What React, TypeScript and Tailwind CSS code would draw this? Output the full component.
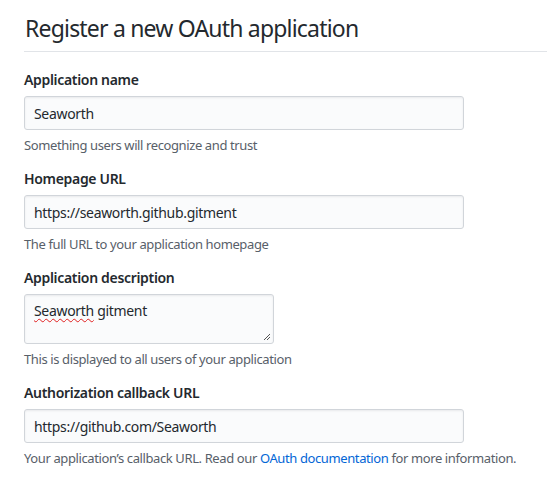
const font = { fontFamily: '"Noto Sans", "Open Sans", sans-serif' };

function Field({
  label,
  value,
  note,
}: {
  label: string;
  value: string;
  note: React.ReactNode;
}) {
  return (
    <div className="mb-[15px]">
      <div className="text-[14px] leading-[20px] font-semibold text-[#24292e]">{label}</div>
      <div className="mt-[6px] w-[440px] h-[34px] flex items-center px-[9px] bg-[#fafbfc] border border-[#d1d5da] rounded-[3px] text-[14px] text-[#24292e] shadow-[inset_0_1px_2px_rgba(27,31,35,0.075)]">
        {value}
      </div>
      <div className="mt-[6px] text-[13px] leading-[18px] tracking-[-0.03em] text-[#586069]">{note}</div>
    </div>
  );
}

export default function App() {
  return (
    <div className="min-h-screen bg-white pl-[24px] pt-[13px] tracking-[-0.02em]" style={font}>
      {/* 見出し */}
      <div className="pb-[8px] border-b border-[#e1e4e8] mb-[18px]">
        <h1 className="text-[23px] leading-[30px] font-normal tracking-[-0.035em] text-[#24292e] pl-[1px]">
          Register a new OAuth application
        </h1>
      </div>

      <Field label="Application name" value="Seaworth" note="Something users will recognize and trust" />
      <Field
        label="Homepage URL"
        value="https://seaworth.github.gitment"
        note="The full URL to your application homepage"
      />

      {/* 説明 */}
      <div className="mb-[15px]">
        <div className="text-[14px] leading-[20px] font-semibold text-[#24292e]">Application description</div>
        <div className="relative mt-[6px] w-[250px] h-[50px] px-[9px] py-[6px] bg-[#fafbfc] border border-[#d1d5da] rounded-[3px] text-[14px] leading-[20px] text-[#24292e] shadow-[inset_0_1px_2px_rgba(27,31,35,0.075)]">
          <span className="underline decoration-wavy decoration-[#e02020] decoration-1 underline-offset-2">Seaworth</span> gitment
          <svg className="absolute right-[2px] bottom-[2px]" width="9" height="9" viewBox="0 0 9 9">
            <path d="M8 2 L2 8 M8 5 L5 8" stroke="#555" strokeWidth="1" />
          </svg>
        </div>
        <div className="mt-[6px] text-[13px] leading-[18px] tracking-[-0.03em] text-[#586069]">
          This is displayed to all users of your application
        </div>
      </div>

      <Field
        label="Authorization callback URL"
        value="https://github.com/Seaworth"
        note={
          <>
            Your application’s callback URL. Read our{" "}
            <a className="text-[#0366d6]">OAuth documentation</a> for more information.
          </>
        }
      />
    </div>
  );
}
